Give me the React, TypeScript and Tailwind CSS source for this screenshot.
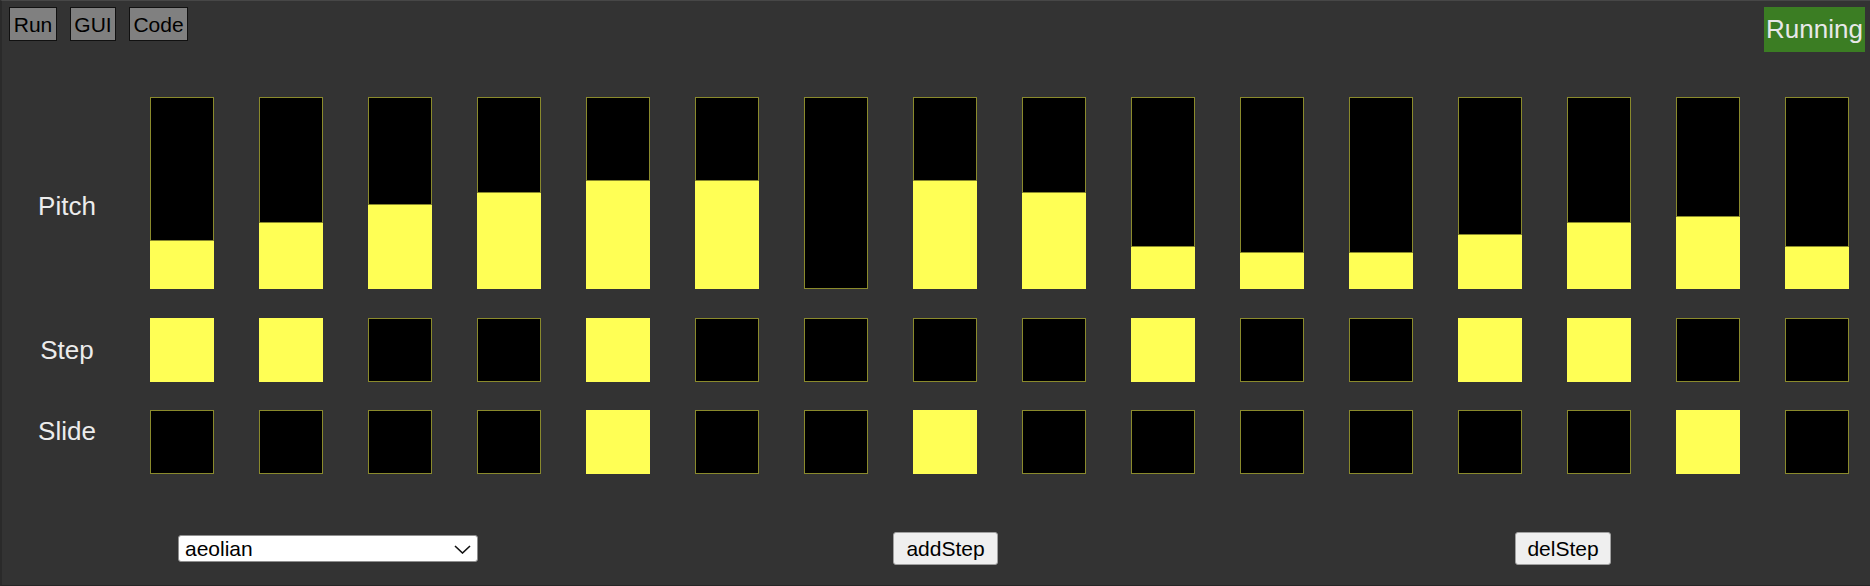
import React from 'react';

const pitches = [8, 11, 14, 16, 18, 18, 0, 18, 16, 7, 6, 6, 9, 11, 12, 7];
const steps = [1, 1, 0, 0, 1, 0, 0, 0, 0, 1, 0, 0, 1, 1, 0, 0];
const slides = [0, 0, 0, 0, 1, 0, 0, 1, 0, 0, 0, 0, 0, 0, 1, 0];

const BAR_H = 192;

const PitchBar: React.FC<{ value: number }> = ({ value }) => {
  const fill = Math.round((value / 32) * BAR_H);
  return (
    <div className="flex flex-col w-[64px] h-[192px]">
      <div className="bg-black border border-[#8a8a2c]" style={{ height: BAR_H - fill }} />
      <div className="flex-1 bg-[#ffff55]" />
    </div>
  );
};

const Toggle: React.FC<{ on: number }> = ({ on }) => (
  <div
    className={
      on
        ? 'w-[64px] h-[64px] bg-[#ffff55]'
        : 'w-[64px] h-[64px] bg-black border border-[#8a8a2c]'
    }
  />
);

export default function App() {
  return (
    <div className="w-full h-[586px] bg-[#333333] border-t border-t-[#474747] border-l-2 border-l-[#2a2a2a] border-b border-b-[#262626] font-['Liberation_Sans',Arial,sans-serif] overflow-hidden">
      {/* header */}
      <div className="flex items-start justify-between pt-[6px] pl-[7px] pr-[5px]">
        <div className="flex gap-[13px]">
          <button className="w-[48px] h-[34px] bg-[#808080] border border-[#111] text-black text-[21px] leading-none">Run</button>
          <button className="w-[46px] h-[34px] bg-[#808080] border border-[#111] text-black text-[21px] leading-none">GUI</button>
          <button className="w-[59px] h-[34px] bg-[#808080] border border-[#111] text-black text-[21px] leading-none">Code</button>
        </div>
        <div className="w-[101px] h-[45px] bg-[#3b7d23] text-[#e8e8e8] text-[26px] flex items-center justify-center">Running</div>
      </div>

      {/* pitch */}
      <div className="flex items-start mt-[45px]">
        <div className="w-[130px] text-center text-[26px] leading-[30px] text-[#ececec] mt-[94px]">Pitch</div>
        <div className="ml-[18px] flex gap-[45px]">
          {pitches.map((p, i) => (
            <PitchBar key={i} value={p} />
          ))}
        </div>
      </div>

      {/* step */}
      <div className="flex items-start mt-[29px]">
        <div className="w-[130px] text-center text-[26px] leading-[30px] text-[#ececec] mt-[17px]">Step</div>
        <div className="ml-[18px] flex gap-[45px]">
          {steps.map((s, i) => (
            <Toggle key={i} on={s} />
          ))}
        </div>
      </div>

      {/* slide */}
      <div className="flex items-start mt-[28px]">
        <div className="w-[130px] text-center text-[26px] leading-[30px] text-[#ececec] mt-[6px]">Slide</div>
        <div className="ml-[18px] flex gap-[45px]">
          {slides.map((s, i) => (
            <Toggle key={i} on={s} />
          ))}
        </div>
      </div>

      {/* controls */}
      <div className="flex items-center mt-[58px] pl-[176px]">
        <div className="relative w-[300px] h-[27px]">
          <select
            defaultValue="aeolian"
            className="appearance-none w-full h-full bg-white border border-[#8f8f8f] rounded-[3px] pl-[6px] text-[21px] leading-none text-black"
          >
            <option value="aeolian">aeolian</option>
            <option value="dorian">dorian</option>
            <option value="ionian">ionian</option>
          </select>
          <svg className="absolute right-[7px] top-[10px] pointer-events-none" width="17" height="9" viewBox="0 0 17 9" fill="none">
            <path d="M1 1 L8.5 8 L16 1" stroke="#111" strokeWidth="1.6" />
          </svg>
        </div>
        <button className="ml-[415px] w-[105px] h-[33px] bg-[#efefef] border border-[#a0a0a0] rounded-[3px] text-black text-[21px] leading-none">addStep</button>
        <button className="ml-[517px] w-[96px] h-[33px] bg-[#efefef] border border-[#a0a0a0] rounded-[3px] text-black text-[21px] leading-none">delStep</button>
      </div>
    </div>
  );
}
